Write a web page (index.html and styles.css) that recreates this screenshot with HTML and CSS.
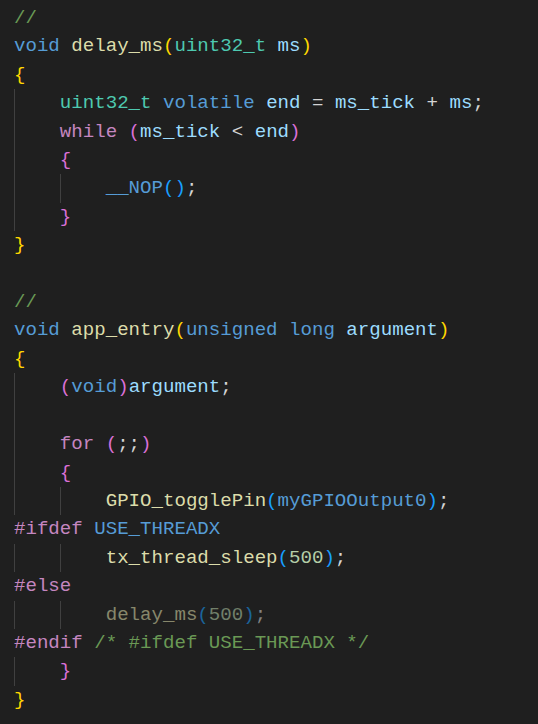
FILE: index.html
```html
<!DOCTYPE html>
<html>
<head>
<meta charset="utf-8">
<link rel="stylesheet" href="styles.css">
</head>
<body>
<div class="code">
<div class="ln"><span class="cm">//</span></div>
<div class="ln"><span class="k">void</span> <span class="f">delay_ms</span><span class="b1">(</span><span class="t">uint32_t</span> <span class="v">ms</span><span class="b1">)</span></div>
<div class="ln"><span class="b1">{</span></div>
<div class="ln g1">    <span class="t">uint32_t</span> <span class="k">volatile</span> <span class="v">end</span> = <span class="v">ms_tick</span> + <span class="v">ms</span>;</div>
<div class="ln g1">    <span class="c">while</span> <span class="b2">(</span><span class="v">ms_tick</span> &lt; <span class="v">end</span><span class="b2">)</span></div>
<div class="ln g1">    <span class="b2">{</span></div>
<div class="ln g2">        <span class="m">__NOP</span><span class="b3">()</span>;</div>
<div class="ln g1">    <span class="b2">}</span></div>
<div class="ln"><span class="b1">}</span></div>
<div class="ln"> </div>
<div class="ln"><span class="cm">//</span></div>
<div class="ln"><span class="k">void</span> <span class="f">app_entry</span><span class="b1">(</span><span class="k">unsigned</span> <span class="k">long</span> <span class="v">argument</span><span class="b1">)</span></div>
<div class="ln"><span class="b1">{</span></div>
<div class="ln g1">    <span class="b2">(</span><span class="k">void</span><span class="b2">)</span><span class="v">argument</span>;</div>
<div class="ln g1"> </div>
<div class="ln g1">    <span class="c">for</span> <span class="b2">(</span>;;<span class="b2">)</span></div>
<div class="ln g1">    <span class="b2">{</span></div>
<div class="ln g2">        <span class="f">GPIO_togglePin</span><span class="b3">(</span><span class="m">myGPIOOutput0</span><span class="b3">)</span>;</div>
<div class="ln"><span class="c">#ifdef</span> <span class="m">USE_THREADX</span></div>
<div class="ln g2">        <span class="f">tx_thread_sleep</span><span class="b3">(</span><span class="n">500</span><span class="b3">)</span>;</div>
<div class="ln"><span class="c">#else</span></div>
<div class="ln g2">        <span class="dim"><span class="f">delay_ms</span><span class="b3">(</span><span class="n">500</span><span class="b3">)</span>;</span></div>
<div class="ln"><span class="c">#endif</span> <span class="cm">/* #ifdef USE_THREADX */</span></div>
<div class="ln g1">    <span class="b2">}</span></div>
<div class="ln"><span class="b1">}</span></div>
</div>
</body>
</html>
```
FILE: styles.css
```css
html, body {
  margin: 0;
  padding: 0;
  background: #1f1f1f;
}
body {
  width: 538px;
  height: 724px;
  overflow: hidden;
}
.code {
  display: flex;
  flex-direction: column;
  padding: 4px 0 0 14px;
  font-family: "Liberation Mono", monospace;
  font-size: 19.1px;
  color: #d4d4d4;
}
.ln {
  height: 28.42px;
  line-height: 28.42px;
  white-space: pre;
  background-repeat: no-repeat;
}
.g1 {
  background-image: linear-gradient(#404040, #404040);
  background-size: 1px 100%;
  background-position: 0 0;
}
.g2 {
  background-image: linear-gradient(#404040, #404040), linear-gradient(#404040, #404040);
  background-size: 1px 100%, 1px 100%;
  background-position: 0 0, 4ch 0;
}
.k { color: #569cd6; }
.f { color: #dcdcaa; }
.t { color: #4ec9b0; }
.v { color: #9cdcfe; }
.c { color: #c586c0; }
.m { color: #569cd6; }
.n { color: #b5cea8; }
.cm { color: #6a9955; }
.b1 { color: #ffd700; }
.b2 { color: #da70d6; }
.b3 { color: #179fff; }
.dim { opacity: 0.55; }
```
